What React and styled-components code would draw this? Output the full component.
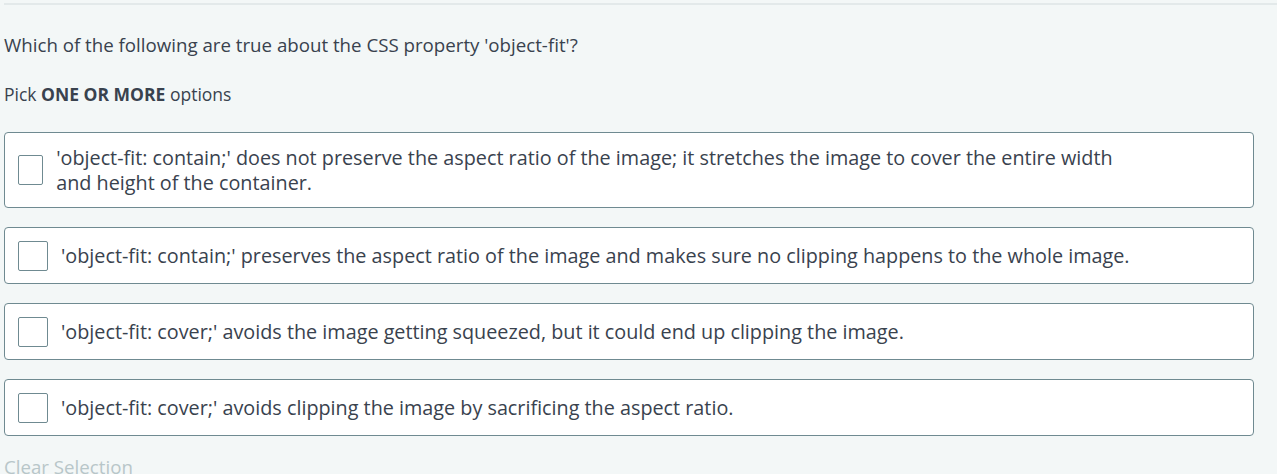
import React from "react";
import styled, { createGlobalStyle } from "styled-components";

const GlobalStyle = createGlobalStyle`
  html, body {
    margin: 0;
    padding: 0;
    background: #f3f7f7;
  }
  body {
    font-family: "Open Sans", "Liberation Sans", sans-serif;
    color: #39424e;
    overflow: hidden;
  }
`;

const options = [
  "'object-fit: contain;' does not preserve the aspect ratio of the image; it stretches the image to cover the entire width and height of the container.",
  "'object-fit: contain;' preserves the aspect ratio of the image and makes sure no clipping happens to the whole image.",
  "'object-fit: cover;' avoids the image getting squeezed, but it could end up clipping the image.",
  "'object-fit: cover;' avoids clipping the image by sacrificing the aspect ratio.",
];

const App = () => {
  return (
    <>
      <GlobalStyle />
      <Page>
        <Question>
          <Prompt>Which of the following are true about the CSS property 'object-fit'?</Prompt>
          <Hint>
            Pick <strong>ONE OR MORE</strong> options
          </Hint>
          <OptionList>
            {options.map((text) => (
              <Option key={text}>
                <Box />
                <OptionText>{text}</OptionText>
              </Option>
            ))}
          </OptionList>
          <ClearButton>Clear Selection</ClearButton>
        </Question>
      </Page>
    </>
  );
};

export default App;

const Page = styled.div`
  padding: 3px 0 0 4px;
`;

const Question = styled.div`
  border-top: 2px solid #e3e9ea;
  padding-right: 23px;
`;

const Prompt = styled.p`
  margin: 28px 0 0;
  font-size: 18.7px;
  line-height: 24px;
`;

const Hint = styled.p`
  margin: 25px 0 0;
  font-size: 17.5px;
  line-height: 24px;
  strong {
    font-weight: 700;
  }
`;

const OptionList = styled.div`
  display: flex;
  flex-direction: column;
  gap: 19px;
  margin-top: 26px;
`;

const Option = styled.label`
  display: flex;
  align-items: center;
  background: #fff;
  border: 1px solid #6f8a91;
  border-radius: 4px;
  padding: 12px 105px 12px 13px;
  min-height: 31px;
`;

const Box = styled.span`
  width: 30px;
  height: 30px;
  box-sizing: border-box;
  border: 1px solid #6f8a91;
  border-radius: 2px;
  background: #fff;
  flex-shrink: 1;
`;

const OptionText = styled.span`
  margin-left: 13px;
  font-size: 19.8px;
  line-height: 25px;
`;

const ClearButton = styled.div`
  margin-top: 19px;
  font-size: 18.7px;
  line-height: 24px;
  color: #b8c6c9;
`;
